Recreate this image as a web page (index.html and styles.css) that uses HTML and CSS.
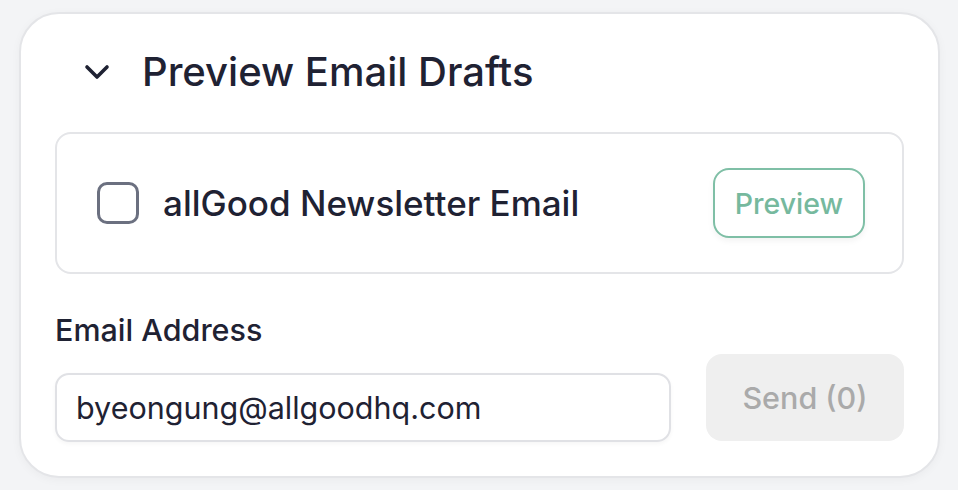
FILE: index.html
```html
<!DOCTYPE html>
<html lang="en">
  <head>
    <meta charset="UTF-8" />
    <meta name="viewport" content="width=device-width, initial-scale=1.0" />
    <title>Preview Email Drafts</title>
    <link rel="stylesheet" href="styles.css">
  </head>
  <body>
    <div class="panel">
      <div class="panel-head">
        <svg class="chevron" width="26" height="16" viewBox="0 0 26 16">
          <path d="M3 3 L13 13 L23 3" fill="none" stroke="#1f2233" stroke-width="3.6" stroke-linecap="round" stroke-linejoin="round" />
        </svg>
        <h2>Preview Email Drafts</h2>
      </div>

      <div class="draft">
        <label class="draft-name">
          <span class="box"></span>
          allGood Newsletter Email
        </label>
        <button class="preview">Preview</button>
      </div>

      <p class="field-label">Email Address</p>
      <div class="send-row">
        <div class="input">byeongung@allgoodhq.com</div>
        <button class="send">Send (0)</button>
      </div>
    </div>
  </body>
</html>
```

FILE: styles.css
```css
* {
  margin: 0;
  box-sizing: border-box;
}

body {
  margin: 0;
  padding: 12px 18px 12px 19px;
  background: #f3f4f6;
  font-family: Inter, "Noto Sans", sans-serif;
  color: #1f2233;
}

.panel {
  background: #fff;
  border: 2px solid #e4e5e8;
  border-radius: 40px;
  box-shadow: 0 2px 10px rgba(0, 0, 0, 0.04);
  padding: 32px 34px 34px 34px;
  height: 466px;
}

.panel-head {
  display: flex;
  align-items: center;
  gap: 32px;
  padding-left: 29px;
  height: 52px;
}

.chevron {
  display: block;
}

h2 {
  font-size: 40px;
  font-weight: 500;
  line-height: 1;
}

.draft {
  margin-top: 34px;
  border: 2px solid #e4e5e8;
  border-radius: 16px;
  height: 142px;
  display: flex;
  align-items: center;
  justify-content: space-between;
  padding: 0 37px 0 40px;
}

.draft-name {
  display: flex;
  align-items: center;
  gap: 24px;
  font-size: 35px;
  font-weight: 500;
}

.box {
  width: 42px;
  height: 42px;
  border: 3.5px solid #6b7080;
  border-radius: 10px;
}

button {
  font-family: inherit;
  border: none;
  cursor: pointer;
}

.preview {
  width: 152px;
  height: 70px;
  background: #fff;
  border: 2px solid #7fbfa6;
  border-radius: 16px;
  color: #76b99e;
  font-size: 28.5px;
  font-weight: 500;
  box-shadow: 0 3px 6px rgba(0, 0, 0, 0.05);
}

.field-label {
  margin-top: 38px;
  font-size: 30.5px;
  font-weight: 500;
  line-height: 36px;
}

.send-row {
  display: flex;
  align-items: flex-end;
  justify-content: space-between;
  margin-top: 6px;
}

.input {
  width: 616px;
  height: 69px;
  border: 2px solid #e0e1e5;
  border-radius: 14px;
  padding-left: 19px;
  display: flex;
  align-items: center;
  font-size: 30.5px;
  box-shadow: 0 2px 4px rgba(0, 0, 0, 0.04);
}

.send {
  width: 198px;
  height: 87px;
  margin-bottom: 1px;
  background: #efefef;
  border-radius: 16px;
  color: #aaaaaa;
  font-size: 30.5px;
  font-weight: 500;
}
```
